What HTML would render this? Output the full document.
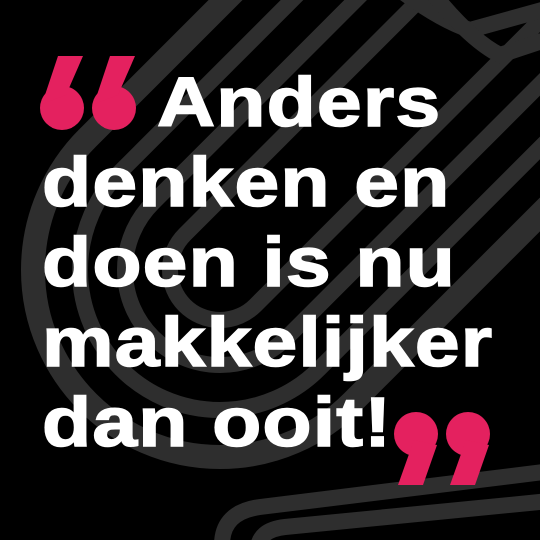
<!DOCTYPE html>
<html><head><meta charset="utf-8"><style>
html,body{margin:0;padding:0;background:#000;}
#c{position:relative;width:540px;height:540px;overflow:hidden;background:#000;}
svg{position:absolute;left:0;top:0;}
.t{position:absolute;left:0;top:0;width:540px;height:540px;color:#fff;font-family:"Liberation Sans",sans-serif;font-weight:bold;font-size:70px;letter-spacing:1px;line-height:80px;white-space:nowrap;-webkit-text-stroke:1.5px #fff;}
.t div{position:absolute;transform:scaleX(1.15);transform-origin:0 0;}
</style></head><body><div id="c">
<svg width="540" height="540" viewBox="0 0 540 540">
<g fill="none" stroke="#2e2e2e" transform="rotate(-45 220 270)">
<rect x="170" y="220" width="700" height="100" rx="50" stroke-width="16"/>
<rect x="125" y="175" width="700" height="190" rx="95" stroke-width="16"/>
<rect x="80" y="130" width="700" height="280" rx="140" stroke-width="16"/>
<rect x="33" y="83" width="700" height="374" rx="187" stroke-width="24"/>
</g>
<g fill="none" stroke="#2e2e2e" stroke-width="16">
<path d="M222 545 Q222 512 260 507 L560 470"/>
<path d="M258 550 Q258 530 285 527 L560 500"/>
<path d="M400 -10 Q440 20 470 30 L560 5"/>
<path d="M430 -10 Q470 40 500 55 L560 35"/>
</g>
<g fill="#e4215f">
<circle cx="62" cy="108" r="22"/><path d="M58 56 H83 L66 95 L42 104 Z"/>
<circle cx="114" cy="108" r="22"/><path d="M110 56 H135 L118 95 L94 104 Z"/>
<circle cx="416" cy="434" r="22"/><path d="M398 485 H423 L437 445 L414 440 Z"/>
<circle cx="468" cy="434" r="22"/><path d="M450 485 H475 L489 445 L466 440 Z"/>
</g>
</svg>
<div class="t">
<div style="left:157px;top:62px">Anders</div>
<div style="left:42px;top:142px">denken en</div>
<div style="left:42px;top:222px">doen is nu</div>
<div style="left:42px;top:302px">makkelijker</div>
<div style="left:42px;top:382px">dan ooit!</div>
</div>
</div></body></html>
